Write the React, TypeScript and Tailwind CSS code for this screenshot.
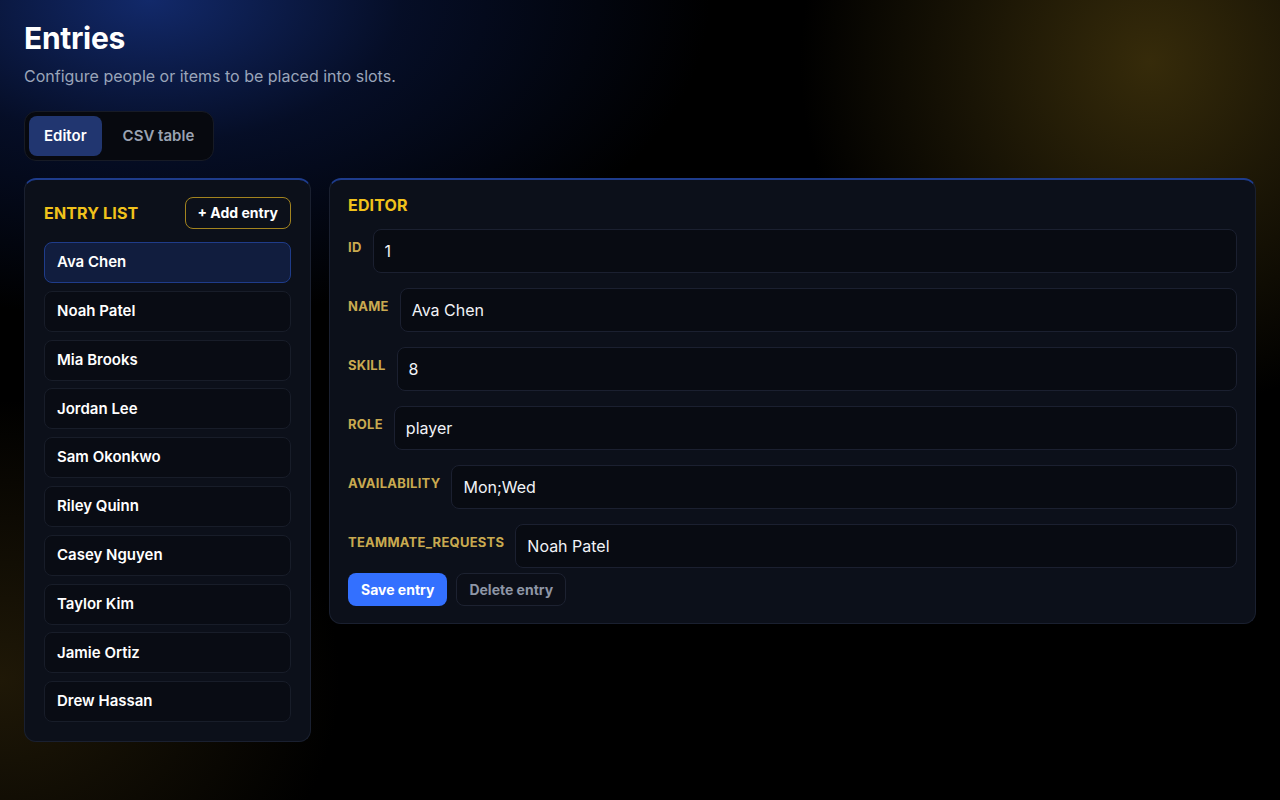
import React from "react";

const entries = [
  "Ava Chen",
  "Noah Patel",
  "Mia Brooks",
  "Jordan Lee",
  "Sam Okonkwo",
  "Riley Quinn",
  "Casey Nguyen",
  "Taylor Kim",
  "Jamie Ortiz",
  "Drew Hassan",
];

const fields: [string, string][] = [
  ["ID", "1"],
  ["NAME", "Ava Chen"],
  ["SKILL", "8"],
  ["ROLE", "player"],
  ["AVAILABILITY", "Mon;Wed"],
  ["TEAMMATE_REQUESTS", "Noah Patel"],
];

export default function App() {
  return (
    <div className="min-h-screen w-full bg-black bg-[radial-gradient(ellipse_560px_320px_at_150px_0px,#12296a_0%,rgba(10,25,70,0.55)_45%,rgba(0,0,0,0)_100%),radial-gradient(circle_350px_at_1150px_62px,#362b0a_0%,rgba(40,32,8,0.65)_50%,rgba(0,0,0,0)_100%),radial-gradient(ellipse_340px_280px_at_0px_680px,#1f1807_0%,rgba(0,0,0,0)_100%)] px-6 pt-5 pb-10 font-['Inter',sans-serif] text-white">
      <h1 className="text-[30px] font-bold leading-9 tracking-[-0.01em] text-white">Entries</h1>
      <p className="mt-2 text-base leading-6 text-[#9aa5ba]">Configure people or items to be placed into slots.</p>

      <div className="mt-[23px] inline-flex h-[50px] items-center gap-[6px] rounded-xl border border-[#171b26] bg-[#07090f] p-[4px]">
        <button className="h-[40px] rounded-lg bg-[#213670] px-[15px] text-[15px] font-semibold text-white">Editor</button>
        <button className="h-[40px] rounded-lg px-[15px] text-[15px] font-semibold text-[#9aa3b2]">CSV table</button>
      </div>

      <div className="mt-[17px] grid grid-cols-[287px_1fr] items-start gap-[18px]">
        <div className="rounded-xl border border-[#1a2030] border-t-2 border-t-[#1e3c8c] bg-[#0c101a] px-[19px] pt-[17px] pb-[19px]">
          <div className="flex h-8 items-center justify-between">
            <span className="text-base font-bold tracking-[0.01em] text-[#f1c21b]">ENTRY LIST</span>
            <button className="h-8 rounded-lg border border-[#a3841f] px-[12px] text-sm font-bold text-white">+ Add entry</button>
          </div>
          <div className="mt-[13px] flex flex-col gap-[7.8px]">
            {entries.map((e, i) => (
              <div
                key={e}
                className={
                  i === 0
                    ? "flex h-[41px] items-center rounded-lg border border-[#1f3c8a] bg-[#111d3e] px-3 text-[15px] font-semibold text-white"
                    : "flex h-[41px] items-center rounded-lg border border-[#181d29] bg-[#090c14] px-3 text-[15px] font-semibold text-white"
                }
              >
                {e}
              </div>
            ))}
          </div>
        </div>

        <div className="rounded-xl border border-[#1a2030] border-t-2 border-t-[#1e3c8c] bg-[#0c101a] px-[18px] pt-[15px] pb-[17px]">
          <div className="text-base font-bold leading-5 tracking-[0.01em] text-[#f1c21b]">EDITOR</div>
          <div className="mt-[14px] flex flex-col gap-[15px]">
            {fields.map(([label, value]) => (
              <div key={label} className="flex items-start gap-[11px]">
                <span className="pt-[10px] text-[13px] font-bold leading-4 tracking-[0.02em] text-[#c9aa50]">{label}</span>
                <div className="flex h-[44px] flex-1 items-center rounded-lg border border-[#1b2030] bg-[#080b12] px-[11px] text-base text-[#f1f3f7]">
                  {value}
                </div>
              </div>
            ))}
          </div>
          <div className="mt-[5px] flex gap-[9px]">
            <button className="h-[33px] rounded-lg bg-[#3370ff] px-[13px] text-sm font-bold text-white">Save entry</button>
            <button className="h-[33px] rounded-lg border border-[#1d2231] bg-[#0b0e17] px-[12px] text-sm font-bold text-[#8e96a6]">Delete entry</button>
          </div>
        </div>
      </div>
    </div>
  );
}
